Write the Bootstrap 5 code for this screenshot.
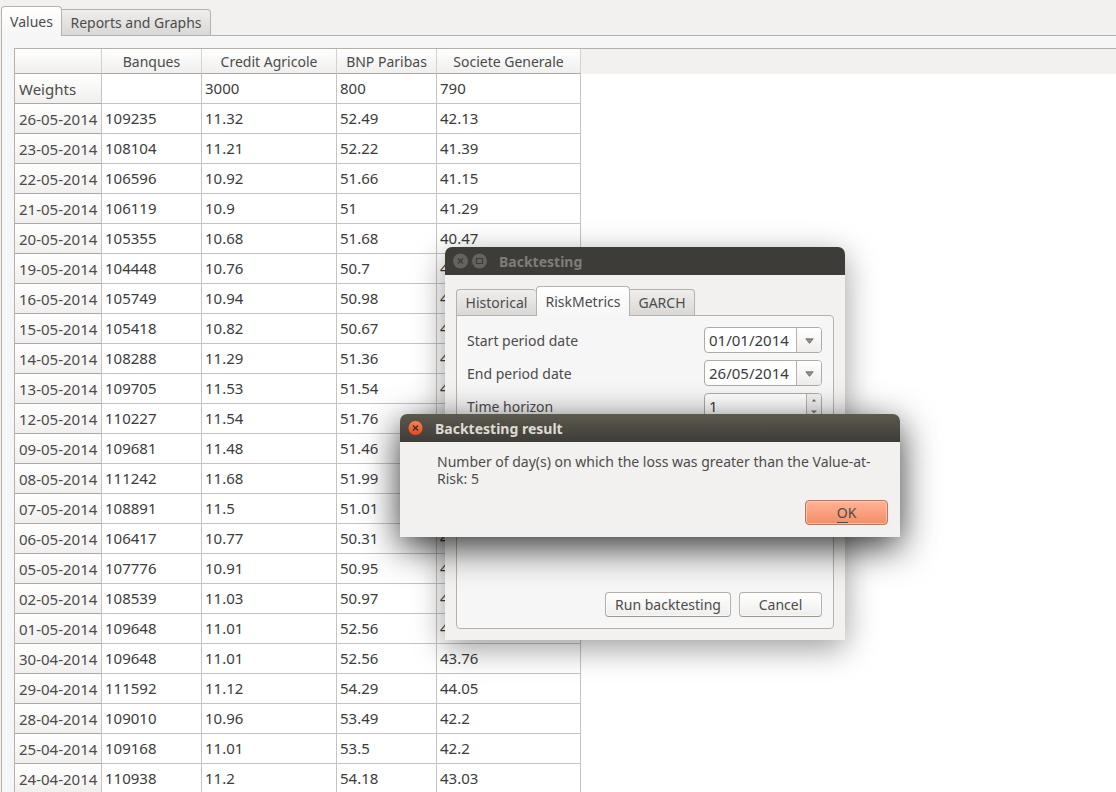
<!DOCTYPE html>
<html lang="en">
<head>
<meta charset="utf-8">
<meta name="viewport" content="width=device-width, initial-scale=1">
<title>Backtesting</title>
<link href="https://cdn.jsdelivr.net/npm/bootstrap@5.3.0/dist/css/bootstrap.min.css" rel="stylesheet">
<style>
:root { --ink: #4c4c4c; --edge: #b6b1ab; --face: #f2f1f0; }
body { font-family: "Noto Sans", "Open Sans", sans-serif; font-size: 14px; line-height: 17px; color: var(--ink); background: var(--face); }
.workspace { padding-top: 6px; height: 100vh; }

/* tab strips */
.tabstrip { border: 0; flex-wrap: nowrap; align-items: flex-end; position: relative; z-index: 1; }
.tabstrip .nav-link { color: var(--ink); border: 1px solid var(--edge); border-left-width: 0; border-radius: 0 4px 0 0; margin: 0; padding: 0 6px; height: 27px; line-height: 25px; background: linear-gradient(#efeeed, #dad8d6); white-space: nowrap; }
.tabstrip .nav-item:first-child .nav-link { border-left-width: 1px; border-radius: 4px 4px 0 0; }
.tabstrip .nav-link.active { height: 30px; line-height: 29px; color: var(--ink); background: linear-gradient(#fff, #f6f6f6); border: 1px solid var(--edge); border-bottom: 0; border-radius: 4px 4px 0 0; }
.main-tabs { margin-left: 1px; }
.main-tabs .nav-item:first-child { width: 61px; }
.main-tabs .nav-item:last-child { width: 149px; }
.main-pane { margin: -1px 0 0 1px; padding: 12px 0 0 12px; border: 1px solid var(--edge); border-width: 1px 0 0 1px; background: #f6f6f6; min-height: 0; }

/* quote sheet */
.sheet { background: #fff; border: 1px solid var(--edge); border-width: 1px 0 0 1px; }
.sheet-head { background: linear-gradient(var(--face), var(--face)) 0 0 / 100% 25px no-repeat; }
.quotes { table-layout: fixed; width: 566px; border-collapse: separate; border-spacing: 0; font-size: 15px; color: #3c3c3c; }
.quotes th, .quotes td { padding: 0 3px; height: 30px; line-height: 29px; border-right: 1px solid #c6c4c2; border-bottom: 1px solid #c6c4c2; white-space: nowrap; overflow: hidden; }
.quotes th { font-weight: 400; color: var(--ink); background: linear-gradient(#fff, #f0efed); }
.quotes thead th { height: 25px; padding-top: 1px; line-height: 23px; font-size: 14px; text-align: center; border-bottom-color: #aaa8a5; border-right-color: #d4d1ce; }
.quotes tbody th { border-bottom-color: #aaa8a5; padding: 1px 4px 0; line-height: 28px; }

/* floating windows */
.win { position: absolute; background: var(--face); border-radius: 7px 7px 0 0; }
.win-back { left: 445px; top: 247px; width: 400px; box-shadow: 0 8px 32px rgba(0,0,0,.4); z-index: 10; }
.win-front { left: 400px; top: 414px; width: 500px; box-shadow: 0 10px 36px rgba(0,0,0,.8); z-index: 20; }
.titlebar { height: 28px; padding: 0 8px; border-radius: 7px 7px 0 0; background: #3d3c38; color: #807d78; }
.win-front .titlebar { background: linear-gradient(#5c594f, #3d3c37); color: #dfdbd2; }
.titlebar h2 { font-size: 14px; line-height: 28px; font-weight: 700; margin: 0; padding: 1px 0 0 11px; }
.winbtn { border: 0; padding: 0; background: none; width: 16px; height: 16px; display: block; }
.winbtn + .winbtn { margin-left: 3px; }
.winbtn svg { display: block; }
.risk-tabs { margin: 11px 11px 0; }
.risk-tabs .nav-item:nth-child(1) { width: 80px; }
.risk-tabs .nav-item:nth-child(2) { width: 94px; }
.risk-tabs .nav-item:nth-child(3) { width: 65px; }
.risk-tabs .nav-item:nth-child(1) .nav-link { border-right: 0; }
.risk-pane { margin: -1px 11px 11px; padding: 11px 11px 11px 10px; border: 1px solid var(--edge); border-radius: 0 4px 4px 4px; background: #f6f6f6; min-height: 314px; }
.field { width: 118px; flex-wrap: nowrap; border: 1px solid #aeaaa5; border-radius: 4px; background: #fff; height: 26px; overflow: hidden; }
.field input { border: 0; padding: 0 4px; font-size: 15px; line-height: 24px; color: #3c3c3c; background: transparent; min-width: 0; flex: 1; appearance: textfield; -moz-appearance: textfield; }
.field input::-webkit-inner-spin-button { display: none; }
.field-btn { border: 0; border-left: 1px solid var(--edge); padding: 2px 0 0; width: 25px; background: linear-gradient(#fff, #eeedeb); display: flex; align-items: center; justify-content: center; }
.spin { width: 15px; border-left: 1px solid var(--edge); background: #f3f2f1; }
.spin button { border: 0; padding: 0; background: none; height: 12px; display: flex; align-items: center; justify-content: center; }
.push { font-size: 14px; line-height: 23px; height: 25px; padding: 0 6px; color: var(--ink); border: 1px solid #b5b0aa; border-bottom-color: #9c9893; border-radius: 4px; background: linear-gradient(#fff, #efeeec); box-shadow: inset 0 0 0 1px rgba(255,255,255,.6); }
.push-narrow { width: 83px; }
.push-run { width: 126px; }
.push-ok { border-color: #b07a68; background: linear-gradient(#ffb296, #f48e66); box-shadow: inset 0 0 0 1px rgba(255,205,180,.7); }
.push-ok span { border-bottom: 1px solid var(--ink); }
.message { padding: 11px 12px 12px 37px; }
.message p { margin: 0 0 13px; }
</style>
</head>
<body class="overflow-hidden">
<main class="workspace d-flex flex-column">
  <ul class="nav nav-tabs tabstrip main-tabs" role="tablist">
    <li class="nav-item"><button type="button" class="nav-link active w-100" role="tab" aria-selected="true">Values</button></li>
    <li class="nav-item"><button type="button" class="nav-link w-100" role="tab">Reports and Graphs</button></li>
  </ul>
  <section class="main-pane flex-grow-1 d-flex flex-column">
    <div class="sheet flex-grow-1 overflow-hidden">
      <div class="sheet-head">
      <table class="quotes">
        <colgroup><col style="width:87px"><col style="width:100px"><col style="width:135px"><col style="width:100px"><col style="width:144px"></colgroup>
        <thead><tr><th></th><th scope="col">Banques</th><th scope="col">Credit Agricole</th><th scope="col">BNP Paribas</th><th scope="col">Societe Generale</th></tr></thead>
        <tbody>
          <tr><th scope="row">Weights</th><td></td><td>3000</td><td>800</td><td>790</td></tr>
          <tr><th scope="row">26-05-2014</th><td>109235</td><td>11.32</td><td>52.49</td><td>42.13</td></tr>
          <tr><th scope="row">23-05-2014</th><td>108104</td><td>11.21</td><td>52.22</td><td>41.39</td></tr>
          <tr><th scope="row">22-05-2014</th><td>106596</td><td>10.92</td><td>51.66</td><td>41.15</td></tr>
          <tr><th scope="row">21-05-2014</th><td>106119</td><td>10.9</td><td>51</td><td>41.29</td></tr>
          <tr><th scope="row">20-05-2014</th><td>105355</td><td>10.68</td><td>51.68</td><td>40.47</td></tr>
          <tr><th scope="row">19-05-2014</th><td>104448</td><td>10.76</td><td>50.7</td><td>4</td></tr>
          <tr><th scope="row">16-05-2014</th><td>105749</td><td>10.94</td><td>50.98</td><td>4</td></tr>
          <tr><th scope="row">15-05-2014</th><td>105418</td><td>10.82</td><td>50.67</td><td>4</td></tr>
          <tr><th scope="row">14-05-2014</th><td>108288</td><td>11.29</td><td>51.36</td><td>4</td></tr>
          <tr><th scope="row">13-05-2014</th><td>109705</td><td>11.53</td><td>51.54</td><td>4</td></tr>
          <tr><th scope="row">12-05-2014</th><td>110227</td><td>11.54</td><td>51.76</td><td></td></tr>
          <tr><th scope="row">09-05-2014</th><td>109681</td><td>11.48</td><td>51.46</td><td></td></tr>
          <tr><th scope="row">08-05-2014</th><td>111242</td><td>11.68</td><td>51.99</td><td></td></tr>
          <tr><th scope="row">07-05-2014</th><td>108891</td><td>11.5</td><td>51.01</td><td></td></tr>
          <tr><th scope="row">06-05-2014</th><td>106417</td><td>10.77</td><td>50.31</td><td>4</td></tr>
          <tr><th scope="row">05-05-2014</th><td>107776</td><td>10.91</td><td>50.95</td><td>4</td></tr>
          <tr><th scope="row">02-05-2014</th><td>108539</td><td>11.03</td><td>50.97</td><td>4</td></tr>
          <tr><th scope="row">01-05-2014</th><td>109648</td><td>11.01</td><td>52.56</td><td>4</td></tr>
          <tr><th scope="row">30-04-2014</th><td>109648</td><td>11.01</td><td>52.56</td><td>43.76</td></tr>
          <tr><th scope="row">29-04-2014</th><td>111592</td><td>11.12</td><td>54.29</td><td>44.05</td></tr>
          <tr><th scope="row">28-04-2014</th><td>109010</td><td>10.96</td><td>53.49</td><td>42.2</td></tr>
          <tr><th scope="row">25-04-2014</th><td>109168</td><td>11.01</td><td>53.5</td><td>42.2</td></tr>
          <tr><th scope="row">24-04-2014</th><td>110938</td><td>11.2</td><td>54.18</td><td>43.03</td></tr>
        </tbody>
      </table>
      </div>
    </div>
  </section>
</main>

<section class="win win-back" role="dialog" aria-labelledby="back-title">
  <header class="titlebar d-flex align-items-center">
    <button type="button" class="winbtn" aria-label="Close"><svg width="16" height="16" viewBox="0 0 16 16"><circle cx="7.5" cy="8" r="7.5" fill="#65635d"/><path d="M5 5.5l5 5m0-5l-5 5" stroke="#3d3c38" stroke-width="1.2"/></svg></button>
    <button type="button" class="winbtn" aria-label="Maximize"><svg width="16" height="16" viewBox="0 0 16 16"><circle cx="7.5" cy="8" r="7.5" fill="#65635d"/><path d="M4.5 5.5h6v5h-6z" fill="none" stroke="#3d3c38" stroke-width="1.2"/></svg></button>
    <h2 id="back-title">Backtesting</h2>
  </header>
  <ul class="nav nav-tabs tabstrip risk-tabs" role="tablist">
    <li class="nav-item"><button type="button" class="nav-link w-100" role="tab">Historical</button></li>
    <li class="nav-item"><button type="button" class="nav-link active w-100" role="tab" aria-selected="true">RiskMetrics</button></li>
    <li class="nav-item"><button type="button" class="nav-link w-100" role="tab">GARCH</button></li>
  </ul>
  <form class="risk-pane d-flex flex-column">
    <div class="d-grid" style="row-gap:7px">
      <div class="d-flex justify-content-between align-items-center">
        <label for="start">Start period date</label>
        <div class="field input-group"><input id="start" type="text" value="01/01/2014"><button type="button" class="field-btn" aria-label="Choose start date"><svg width="9" height="6" viewBox="0 0 9 6"><path d="M.8 .8h7.4L4.5 5.4z" fill="#8f8f8f" stroke="#666" stroke-width=".8"/></svg></button></div>
      </div>
      <div class="d-flex justify-content-between align-items-center">
        <label for="end">End period date</label>
        <div class="field input-group"><input id="end" type="text" value="26/05/2014"><button type="button" class="field-btn" aria-label="Choose end date"><svg width="9" height="6" viewBox="0 0 9 6"><path d="M.8 .8h7.4L4.5 5.4z" fill="#8f8f8f" stroke="#666" stroke-width=".8"/></svg></button></div>
      </div>
      <div class="d-flex justify-content-between align-items-center">
        <label for="horizon">Time horizon</label>
        <div class="field input-group"><input id="horizon" type="number" value="1"><div class="spin d-flex flex-column"><button type="button" aria-label="Increase"><svg width="6" height="4" viewBox="0 0 6 4"><path d="M1 3.5h4L3 1z" fill="#666"/></svg></button><button type="button" aria-label="Decrease"><svg width="8" height="4" viewBox="0 0 8 4"><path d="M1 .5h6L4 3.5z" fill="#777"/></svg></button></div></div>
      </div>
    </div>
    <div class="d-flex justify-content-end gap-2 mt-auto">
      <button type="button" class="push push-run text-nowrap">Run backtesting</button>
      <button type="button" class="push push-narrow">Cancel</button>
    </div>
  </form>
</section>

<section class="win win-front" role="alertdialog" aria-labelledby="front-title">
  <header class="titlebar d-flex align-items-center">
    <button type="button" class="winbtn" aria-label="Close"><svg width="16" height="16" viewBox="0 0 16 16"><defs><linearGradient id="g" x2="0" y2="1"><stop stop-color="#f5845c"/><stop offset="1" stop-color="#df4a1c"/></linearGradient></defs><circle cx="7.5" cy="8" r="7.5" fill="url(#g)" stroke="#4a352a" stroke-width=".6"/><path d="M5 5.5l5 5m0-5l-5 5" stroke="#40291e" stroke-width="1.2"/></svg></button>
    <h2 id="front-title">Backtesting result</h2>
  </header>
  <div class="message">
    <p>Number of day(s) on which the loss was greater than the Value-at-<br>Risk: 5</p>
    <div class="d-flex justify-content-end"><button type="button" class="push push-narrow push-ok"><span>O</span>K</button></div>
  </div>
</section>
<script src="https://cdn.jsdelivr.net/npm/bootstrap@5.3.0/dist/js/bootstrap.bundle.min.js"></script>
</body>
</html>
